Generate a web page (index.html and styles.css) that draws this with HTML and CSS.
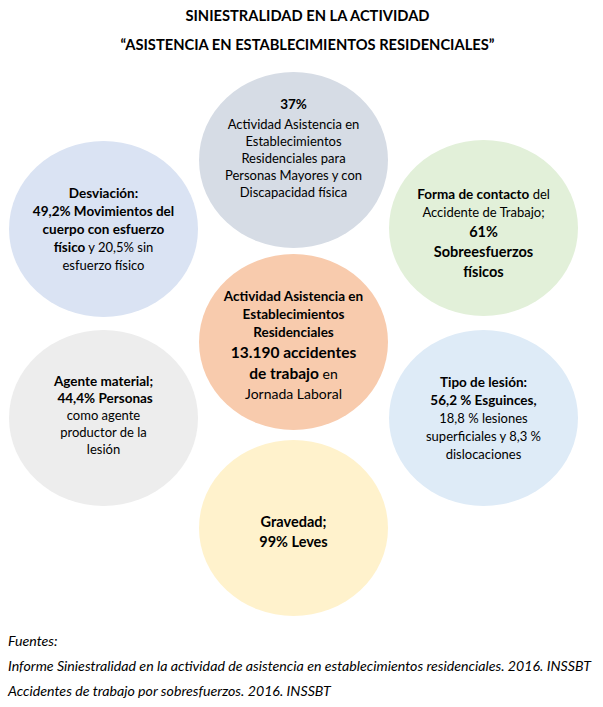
FILE: index.html
```html
<!DOCTYPE html>
<html lang="es">
<head>
<meta charset="utf-8">
<title>Siniestralidad en la actividad</title>
<link rel="stylesheet" href="styles.css">
</head>
<body>
<header class="header">
  <p class="title title-1">SINIESTRALIDAD EN LA ACTIVIDAD</p>
  <p class="title title-2">“ASISTENCIA EN ESTABLECIMIENTOS RESIDENCIALES”</p>
</header>
<main class="diagram">
  <div class="col col-left">
    <div class="bubble bubble-blue">
      <p class="txt lh18"><b>Desviación:</b><br><b>49,2% Movimientos del</b><br><b>cuerpo con esfuerzo</b><br><b>físico</b> y 20,5% sin<br>esfuerzo físico</p>
    </div>
    <div class="bubble bubble-gray gap-side">
      <p class="txt lh17 nudge-up"><b>Agente material;</b><br><b>&nbsp;44,4% Personas</b><br>como agente<br>productor de la<br>lesión</p>
    </div>
  </div>
  <div class="col col-center">
    <div class="bubble bubble-slate">
      <div class="txt lh17 top-text">
        <p class="pct"><b>37%</b></p>
        <p>Actividad Asistencia en<br>Establecimientos<br>Residenciales para<br>Personas Mayores y con<br>Discapacidad física</p>
      </div>
    </div>
    <div class="bubble bubble-orange gap-c1">
      <div class="txt nudge-down-small">
        <p class="lh18"><b>Actividad Asistencia en<br>Establecimientos<br>Residenciales</b></p>
        <p class="big"><b>13.190 accidentes<br>de trabajo</b> en<br><span class="mid">Jornada Laboral</span></p>
      </div>
    </div>
    <div class="bubble bubble-yellow gap-c2">
      <p class="txt grav"><b>Gravedad;<br>99% Leves</b></p>
    </div>
  </div>
  <div class="col col-right">
    <div class="bubble bubble-green">
      <div class="txt nudge-down">
        <p class="lh18"><b>Forma de contacto</b> del<br>Accidente de Trabajo;</p>
        <p class="mid-bold"><b>61%<br>Sobreesfuerzos<br>físicos</b></p>
      </div>
    </div>
    <div class="bubble bubble-sky gap-side-r">
      <p class="txt lh18"><b>Tipo de lesión:<br>56,2 % Esguinces,</b><br>18,8 % lesiones<br>superficiales y 8,3 %<br>dislocaciones</p>
    </div>
  </div>
</main>
<footer class="sources">
  <p>Fuentes:</p>
  <p>Informe Siniestralidad en la actividad de asistencia en establecimientos residenciales. 2016. INSSBT</p>
  <p>Accidentes de trabajo por sobresfuerzos. 2016. INSSBT</p>
</footer>
</body>
</html>
```
FILE: styles.css
```css
* { box-sizing: border-box; }
html, body { margin: 0; padding: 0; background: #ffffff; }
body {
  font-family: Lato, "Open Sans", "DejaVu Sans", sans-serif;
  color: #000000;
  font-size: 13px;
  width: 603px;
}
p { margin: 0; }
b { font-size: 13.5px; }

.header {
  height: 72px;
  padding-top: 5px;
  padding-left: 12px;
  text-align: center;
}
.title {
  font-weight: 700;
  font-size: 14.7px;
  line-height: 20px;
  white-space: nowrap;
}
.title-2 { margin-top: 9px; }

.diagram {
  display: flex;
  gap: 1px;
  padding-left: 9px;
  align-items: flex-start;
}
.col { display: flex; flex-direction: column; width: 189px; }
.col-left { padding-top: 69px; }
.col-right { padding-top: 68px; }

.bubble {
  width: 189px;
  height: 176px;
  border-radius: 50%;
  display: flex;
  align-items: center;
  justify-content: center;
  text-align: center;
}
.gap-side { margin-top: 13px; }
.gap-side-r { margin-top: 14px; }
.gap-c1 { margin-top: 6px; }
.gap-c2 { margin-top: 10px; }

.bubble-slate { background: #d6dce5; }
.bubble-blue { background: #dae3f3; }
.bubble-green { background: #e2f0d9; }
.bubble-orange { background: #f8cbad; }
.bubble-gray { background: #ededed; }
.bubble-sky { background: #deebf7; }
.bubble-yellow { background: #fff2cc; }

.txt { white-space: nowrap; }
.lh17 { line-height: 17px; }
.lh18 { line-height: 18px; }
.top-text { margin-bottom: 24px; }
.pct { margin-bottom: 3px; }
.nudge-up { margin-bottom: 5px; }
.nudge-down { margin-top: 10px; }
.nudge-down-small { margin-top: 6px; }

.big { font-size: 14px; line-height: 20px; margin-top: 1px; }
.big b { font-size: 15.5px; }
.big .mid { font-size: 14px; }
.mid-bold { line-height: 19px; margin-top: 1px; }
.mid-bold b { font-size: 14.5px; }
.grav { line-height: 19px; margin-top: 7px; }
.grav b { font-size: 14.5px; }

.sources {
  margin-top: 12px;
  padding-left: 8px;
  font-style: italic;
  font-size: 14.2px;
  line-height: 25px;
  white-space: nowrap;
}
```
